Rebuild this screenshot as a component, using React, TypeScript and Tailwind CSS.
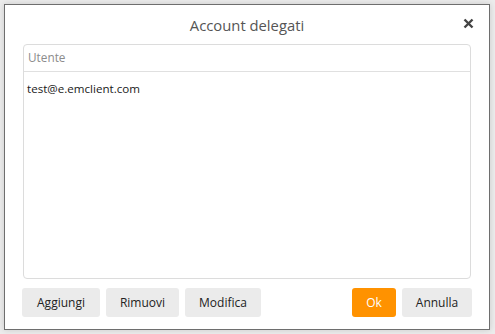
import React from "react";

export default function App() {
  const font = { fontFamily: '"Segoe UI", "Open Sans", "Noto Sans", sans-serif' };
  return (
    <div className="w-[495px] h-[334px] bg-[#ececec] pt-[4px] pl-[4px]" style={font}>
      <div className="w-[486px] h-[326px] bg-white border border-[#6e6e6e] flex flex-col shadow-[0_0_6px_rgba(0,0,0,0.15)]">
        <div className="h-[39px] relative flex items-center justify-center">
          <span className="text-[14.8px] text-[#555555] mt-[1px]">Account delegati</span>
          <svg className="absolute right-[15px] top-[13px]" width="11" height="11" viewBox="0 0 11 11">
            <path d="M1.5 1.5 L9.5 9.5 M9.5 1.5 L1.5 9.5" stroke="#444" strokeWidth="2.4" strokeLinecap="butt" />
          </svg>
        </div>
        <div className="mx-[18px] h-[235px] border border-[#dcdcdc] rounded-[4px] flex flex-col">
          <div className="h-[27px] border-b border-[#e0e0e0] flex items-center pl-[4px]">
            <span className="text-[11.8px] text-[#8c8c8c]">Utente</span>
          </div>
          <div className="h-[34px] flex items-center pl-[3px]">
            <span className="text-[11.6px] text-[#1a1a1a]">test@e.emclient.com</span>
          </div>
        </div>
        <div className="mt-[9px] pl-[17px] pr-[17px] flex items-center">
          <button className="h-[29px] w-[78px] bg-[#ebebeb] rounded-[3px] text-[12px] text-[#222]">Aggiungi</button>
          <button className="h-[29px] w-[73px] ml-[6px] bg-[#ebebeb] rounded-[3px] text-[12px] text-[#222]">Rimuovi</button>
          <button className="h-[29px] w-[76px] ml-[6px] bg-[#ebebeb] rounded-[3px] text-[12px] text-[#222]">Modifica</button>
          <div className="flex-1" />
          <button className="h-[29px] w-[44px] bg-[#ff9200] rounded-[3px] text-[12px] text-white">Ok</button>
          <button className="h-[29px] w-[70px] ml-[6px] bg-[#ebebeb] rounded-[3px] text-[12px] text-[#222]">Annulla</button>
        </div>
      </div>
    </div>
  );
}
